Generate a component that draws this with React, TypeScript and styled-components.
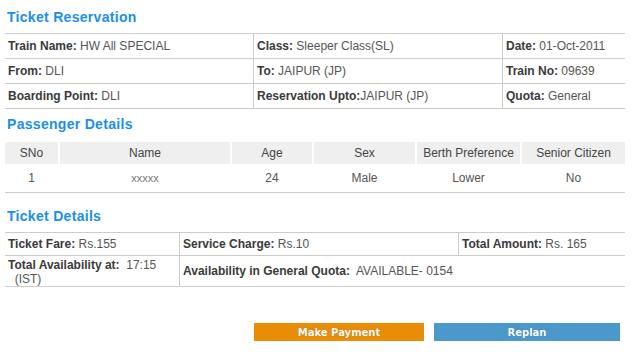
import React from "react";
import styled, { createGlobalStyle } from "styled-components";

const GlobalStyle = createGlobalStyle`
  body {
    margin: 0;
    background: #fff;
    font-family: Arial, "Liberation Sans", sans-serif;
    font-size: 12px;
    color: #555;
  }
`;

const Page = styled.div`
  width: 620px;
  padding: 0 7px 0 5px;
`;

const Heading = styled.h2<{ $top: number }>`
  margin: ${(p) => p.$top}px 0 8px 2px;
  font-size: 14px;
  line-height: 16px;
  font-weight: bold;
  letter-spacing: 0.3px;
  color: #1a90ec;
`;

const InfoTable = styled.div<{ $cols: string }>`
  display: grid;
  grid-template-columns: ${(p) => p.$cols};
  border-top: 1px solid #ccc;
`;

const InfoCell = styled.div<{ $first?: boolean; $h: number; $span?: number }>`
  display: flex;
  align-items: center;
  flex-wrap: wrap;
  height: ${(p) => p.$h}px;
  padding: 0 3px;
  border-bottom: 1px solid #ccc;
  border-left: ${(p) => (p.$first ? "none" : "1px solid #ccc")};
  grid-column: ${(p) => (p.$span ? `span ${p.$span}` : "auto")};
  white-space: pre;
`;

const WrapCell = styled(InfoCell)`
  display: block;
  white-space: normal;
  line-height: 14px;
  padding-top: 2px;
  height: ${(p) => p.$h - 2}px;
`;

const Label = styled.span`
  font-weight: bold;
  color: #3a3a3a;
`;

const Value = styled.span`
  color: #555;
`;

const PassengerGrid = styled.div`
  display: grid;
  grid-template-columns: 53px 170px 80px 101px 103px 103px;
  column-gap: 2px;
  padding-top: 2px;
  border-bottom: 1px solid #ccc;
`;

const HeadCell = styled.div`
  height: 22px;
  display: flex;
  align-items: center;
  justify-content: center;
  background: #efefef;
  color: #444;
`;

const DataCell = styled.div<{ $faint?: boolean }>`
  height: 28px;
  display: flex;
  align-items: center;
  justify-content: center;
  color: ${(p) => (p.$faint ? "#777" : "#555")};
  font-size: ${(p) => (p.$faint ? "11px" : "12px")};
`;

const Actions = styled.div`
  display: flex;
  gap: 10px;
  margin: 36px 0 0 249px;
`;

const Button = styled.button<{ $bg: string; $w: number }>`
  width: ${(p) => p.$w}px;
  height: 18px;
  border: none;
  padding: 0;
  background: ${(p) => p.$bg};
  color: #fff;
  font-family: Verdana, "DejaVu Sans", sans-serif;
  font-size: 10px;
  font-weight: bold;
  text-shadow: 0 0 1px rgba(0, 0, 0, 0.35);
  cursor: pointer;
`;

const Field: React.FC<{ label: string; value: string }> = ({ label, value }) => (
  <>
    <Label>{label}</Label>
    <Value>{value}</Value>
  </>
);

const passengers = [
  { sno: "1", name: "xxxxx", age: "24", sex: "Male", berth: "Lower", senior: "No" },
];

const App: React.FC = () => {
  return (
    <>
      <GlobalStyle />
      <Page>
        <Heading $top={9}>Ticket Reservation</Heading>
        <InfoTable $cols="248px 249px 123px">
          <InfoCell $first $h={24}><Field label="Train Name:" value=" HW All SPECIAL" /></InfoCell>
          <InfoCell $h={24}><Field label="Class:" value=" Sleeper Class(SL)" /></InfoCell>
          <InfoCell $h={24}><Field label="Date:" value=" 01-Oct-2011" /></InfoCell>
          <InfoCell $first $h={24}><Field label="From:" value=" DLI" /></InfoCell>
          <InfoCell $h={24}><Field label="To:" value=" JAIPUR (JP)" /></InfoCell>
          <InfoCell $h={24}><Field label="Train No:" value=" 09639" /></InfoCell>
          <InfoCell $first $h={24}><Field label="Boarding Point:" value=" DLI" /></InfoCell>
          <InfoCell $h={24}><Field label="Reservation Upto:" value="JAIPUR (JP)" /></InfoCell>
          <InfoCell $h={24}><Field label="Quota:" value=" General" /></InfoCell>
        </InfoTable>

        <Heading $top={7}>Passenger Details</Heading>
        <PassengerGrid>
          <HeadCell>SNo</HeadCell>
          <HeadCell>Name</HeadCell>
          <HeadCell>Age</HeadCell>
          <HeadCell>Sex</HeadCell>
          <HeadCell>Berth Preference</HeadCell>
          <HeadCell>Senior Citizen</HeadCell>
          {passengers.map((p) => (
            <React.Fragment key={p.sno}>
              <DataCell>{p.sno}</DataCell>
              <DataCell $faint>{p.name}</DataCell>
              <DataCell>{p.age}</DataCell>
              <DataCell>{p.sex}</DataCell>
              <DataCell>{p.berth}</DataCell>
              <DataCell>{p.senior}</DataCell>
            </React.Fragment>
          ))}
        </PassengerGrid>

        <Heading $top={15}>Ticket Details</Heading>
        <InfoTable $cols="174px 279px 167px">
          <InfoCell $first $h={22}><Field label="Ticket Fare:" value=" Rs.155" /></InfoCell>
          <InfoCell $h={22}><Field label="Service Charge:" value=" Rs.10" /></InfoCell>
          <InfoCell $h={22}><Field label="Total Amount:" value=" Rs. 165" /></InfoCell>
          <WrapCell $first $h={30}>
            <Label>Total Availability at:</Label>
            <Value>{"\u00a0 17:15"}</Value>{" "}
            <Value>{"\u00a0\u00a0(IST)"}</Value>
          </WrapCell>
          <InfoCell $h={30} $span={2}>
            <Field label="Availability in General Quota:" value="  AVAILABLE- 0154" />
          </InfoCell>
        </InfoTable>

        <Actions>
          <Button $bg="#e98d07" $w={170}>Make Payment</Button>
          <Button $bg="#4b98cb" $w={186}>Replan</Button>
        </Actions>
      </Page>
    </>
  );
};

export default App;
